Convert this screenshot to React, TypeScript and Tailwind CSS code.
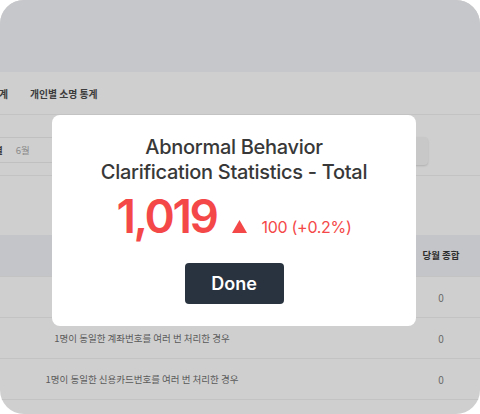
const rows = [
  '1명이 동일한 전화번호를 여러 번 처리한 경우',
  '1명이 동일한 계좌번호를 여러 번 처리한 경우',
  '1명이 동일한 신용카드번호를 여러 번 처리한 경우',
];

const ko = { fontFamily: '"Noto Sans CJK KR", "Noto Sans", sans-serif' };

export default function App() {
  return (
    <div className="w-[480px] h-[414px] bg-white">
      <div className="relative h-full overflow-hidden rounded-[24px] bg-[#cfcfcf]" style={ko}>
        <div className="h-[72px] bg-[#c6c7ca]" />
        <div className="flex h-[43px] items-center gap-[22px] border-b border-[#c3c3c3] pt-[3px] text-[9.8px] font-bold text-[#3c3c3c]">
          <span className="-ml-[10px]">통계</span>
          <span>개인별 소명 통계</span>
        </div>
        <div className="flex h-[61px] items-start border-b border-[#c3c3c3] pt-[22px]">
          <div className="flex h-[26px] w-[380px] items-center gap-[13px] border-y border-[#c0c0c0] text-[9.5px]">
            <span className="-ml-[6px] font-bold text-[#3c3c3c]">별</span>
            <span className="text-[#8a8a8a]">6월</span>
          </div>
          <div className="ml-[20px] h-[28px] w-[28px] rounded-[4px] bg-[#c8c8c8] shadow-[0_1px_2px_rgba(0,0,0,0.15)]" />
        </div>
        <div className="h-[59px]" />
        <div className="flex h-[41px] items-center bg-[#c4c5c8] text-[9.5px] font-bold text-[#2e2e2e]">
          <div className="w-[284px]" />
          <div className="flex-1" />
          <div className="w-[78px] text-center">당월 종합</div>
        </div>
        {rows.map((r) => (
          <div key={r} className="flex h-[41px] items-center border-t border-[#c3c3c3] text-[9.5px] text-[#5a5a5a]">
            <div className="w-[284px] text-center">{r}</div>
            <div className="flex-1" />
            <div className="w-[78px] text-center text-[10px] text-[#6a6a6a]">0</div>
          </div>
        ))}
        <div className="border-t border-[#c3c3c3]" />

        <div
          className="absolute left-[52px] top-[115px] flex h-[211px] w-[364px] flex-col items-center rounded-[8px] bg-white pt-[20px]"
          style={{ fontFamily: 'Inter, "Noto Sans", sans-serif' }}
        >
          <div className="text-center text-[20px] font-medium leading-[25px] tracking-[-0.3px] text-[#383838]">
            Abnormal Behavior
            <br />
            Clarification Statistics - Total
          </div>
          <div className="mt-[3px] flex items-baseline text-[#f44848]">
            <span className="text-[46px] font-semibold leading-[56px] tracking-[-2.4px]">1,019</span>
            <svg width="15" height="13" viewBox="0 0 15 13" className="ml-[15px]">
              <polygon points="7.5,0 15,13 0,13" fill="#f44848" />
            </svg>
            <span className="ml-[15px] text-[16px] tracking-[-0.3px]">100 (+0.2%)</span>
          </div>
          <button className="mt-[19px] h-[41px] w-[99px] rounded-[4px] bg-[#29333f] text-[18px] font-semibold text-white">
            Done
          </button>
        </div>
      </div>
    </div>
  );
}
